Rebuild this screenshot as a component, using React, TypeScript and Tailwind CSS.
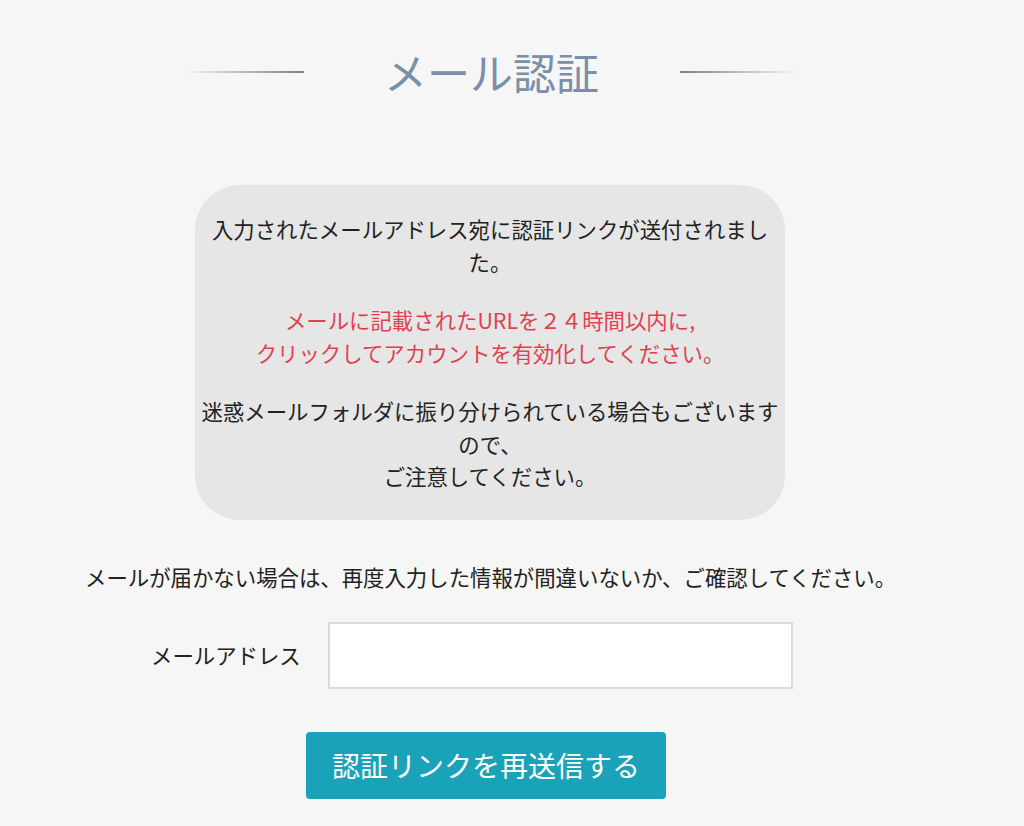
import React from "react";

export default function App() {
  const font = { fontFamily: '"Noto Sans CJK JP", "Noto Sans", sans-serif' };
  return (
    <div className="min-h-[826px] w-full bg-[#f6f6f6] text-[#222]" style={font}>
      <div className="w-[980px] pt-[46px]">
        <div className="flex items-center justify-center">
          <div className="h-[2px] w-[128px] bg-gradient-to-r from-[#ffffff] to-[#808080]" />
          <h1 className="ml-[80px] mr-[81px] text-[43px] leading-[51px] font-normal text-[#7a8fa8] whitespace-nowrap">
            メール認証
          </h1>
          <div className="h-[2px] w-[124px] bg-gradient-to-r from-[#808080] to-[#ffffff]" />
        </div>

        <div className="mx-auto mt-[88px] w-[590px] rounded-[45px] bg-[#e6e6e6] px-[5px] pt-[28px] pb-[27px] text-center text-[21.4px] leading-[32.5px]">
          <p>入力されたメールアドレス宛に認証リンクが送付されました。</p>
          <p className="mt-[26px] text-[#e2404f]">
            メールに記載されたURLを２４時間以内に,
            <br />
            クリックしてアカウントを有効化してください。
          </p>
          <p className="mt-[26px]">
            迷惑メールフォルダに振り分けられている場合もございますので、
            <br />
            ご注意してください。
          </p>
        </div>

        <p className="ml-[85px] mt-[41px] text-[21.4px] leading-[32px] whitespace-nowrap">
          メールが届かない場合は、再度入力した情報が間違いないか、ご確認してください。
        </p>

        <div className="ml-[151px] mt-[29px] flex items-center">
          <label className="text-[21.4px] leading-[32px] whitespace-nowrap">メールアドレス</label>
          <input
            type="text"
            className="ml-[27px] h-[67px] w-[465px] border-2 border-[#d6dce2] bg-white outline-none"
          />
        </div>

        <button className="ml-[306px] mt-[43px] h-[67px] w-[360px] rounded-[4px] bg-[#1aa3b8] text-[28px] text-white" style={font}>
          認証リンクを再送信する
        </button>
      </div>
    </div>
  );
}
